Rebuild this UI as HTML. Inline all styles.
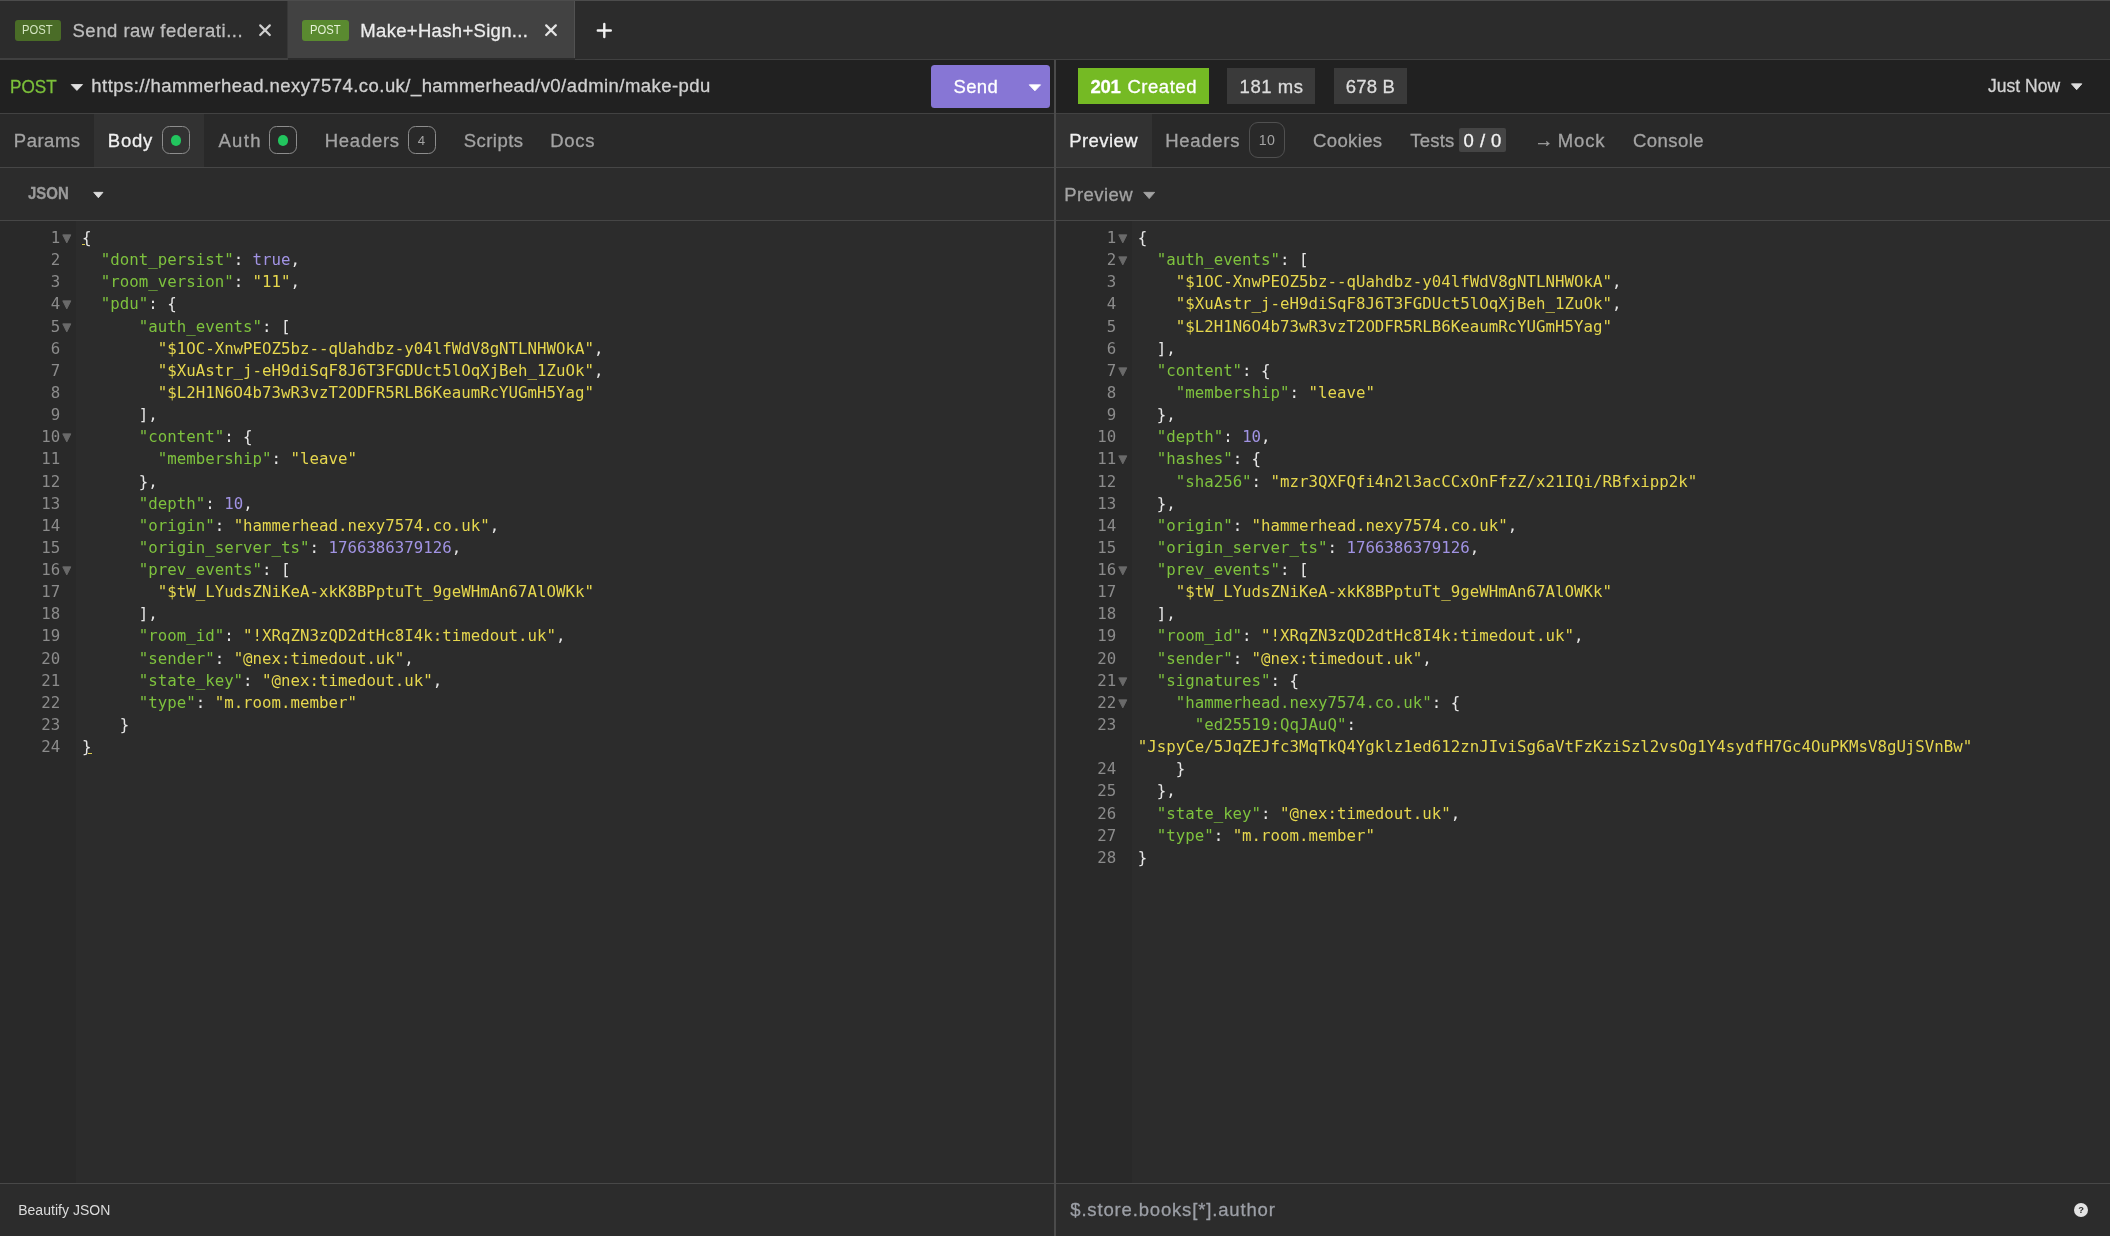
<!DOCTYPE html>
<html lang="en"><head><meta charset="utf-8"><title>Insomnia</title>
<style>
html,body{margin:0;padding:0;background:#2c2c2c;}
body{width:2110px;height:1236px;overflow:hidden;position:relative;font-family:"Liberation Sans", sans-serif;}
#app{position:absolute;left:0;top:0;width:2110px;height:1236px;overflow:hidden;background:#2c2c2c;}
#fg{position:absolute;left:0;top:0;width:2110px;height:1236px;will-change:transform;}
.b{position:absolute;display:block;}
.t{position:absolute;white-space:pre;transform-origin:0 0;}
.h{-webkit-text-stroke:0.3px currentColor;}
.cl,.ln{position:absolute;white-space:pre;font-family:"DejaVu Sans Mono", "Liberation Mono", monospace;font-size:15.7587px;line-height:22px;height:22px;color:#e6e6e6;}
.ln{width:60.3px;text-align:right;color:#8b8b8b;}

.k{color:#7ec23e;} .s{color:#e6d74e;} .n{color:#a193e3;}
</style></head>
<body><div id="app"><div id="fg">
<div class="b" style="left:0px;top:0px;width:2110.00px;height:1.00px;background:#4c4c4c;"></div>
<div class="b" style="left:287.7px;top:1px;width:286.20px;height:56.70px;background:#424242;"></div>
<div class="b" style="left:286.9px;top:1px;width:0.80px;height:56.90px;background:#383838;"></div>
<div class="b" style="left:573.9px;top:1px;width:1.20px;height:56.90px;background:#525252;"></div>
<div class="b" style="left:0px;top:57.9px;width:287.70px;height:2.10px;background:#404040;"></div>
<div class="b" style="left:575.1px;top:58.6px;width:1534.90px;height:1.45px;background:#414141;"></div>
<div class="b" style="left:0px;top:60.0px;width:2110.00px;height:52.70px;background:#212121;"></div>
<div class="b" style="left:0px;top:112.7px;width:2110.00px;height:1.60px;background:#424242;"></div>
<div class="b" style="left:0px;top:114.3px;width:2110.00px;height:52.50px;background:#292929;"></div>
<div class="b" style="left:93.8px;top:114.3px;width:110.10px;height:52.50px;background:#323232;"></div>
<div class="b" style="left:1056px;top:114.3px;width:95.90px;height:52.50px;background:#323232;"></div>
<div class="b" style="left:0px;top:166.8px;width:2110.00px;height:1.50px;background:#464646;"></div>
<div class="b" style="left:0px;top:219.8px;width:2110.00px;height:1.40px;background:#464646;"></div>
<div class="b" style="left:0px;top:221.2px;width:75.75px;height:961.70px;background:#292929;"></div>
<div class="b" style="left:1056px;top:221.2px;width:75.90px;height:961.70px;background:#292929;"></div>
<div class="b" style="left:0px;top:1182.9px;width:2110.00px;height:1.35px;background:#484848;"></div>
<div class="b" style="left:1054.0px;top:60.0px;width:2.05px;height:1176.00px;background:#4b4b4b;"></div>
<div class="b" style="left:15px;top:20px;width:46.00px;height:21.00px;background:#4a6c27;border-radius:3px;"></div>
<div class="b" style="left:302px;top:20px;width:47.00px;height:21.00px;background:#5a8a30;border-radius:3px;"></div>
<svg class="b" style="left:257px;top:22px" width="16" height="17" viewBox="257 22 16 17"><path d="M260.20 25.40L269.80 35.00M269.80 25.40L260.20 35.00" stroke="#cfcfcf" stroke-width="2.2" stroke-linecap="round" fill="none"/></svg>
<svg class="b" style="left:542px;top:22px" width="18" height="17" viewBox="542 22 18 17"><path d="M546.20 25.40L555.80 35.00M555.80 25.40L546.20 35.00" stroke="#e4e4e4" stroke-width="2.3" stroke-linecap="round" fill="none"/></svg>
<svg class="b" style="left:594px;top:20px" width="21" height="21" viewBox="594 20 21 21"><path d="M604.30 24.00V37.00M597.80 30.50H610.80" stroke="#f0f0f0" stroke-width="2.4" stroke-linecap="round" fill="none"/></svg>
<svg class="b" style="left:69px;top:83px" width="15" height="9" viewBox="69 83 15 9"><path d="M71.25 84.55H82.55L76.90 90.42Z" fill="#e0e0e0" stroke="#e0e0e0" stroke-width="0.9" stroke-linejoin="round"/></svg>
<div class="b" style="left:931px;top:65px;width:119.20px;height:43.00px;background:#8776d5;border-radius:3.5px;"></div>
<svg class="b" style="left:1027px;top:83px" width="15" height="10" viewBox="1027 83 15 10"><path d="M1029.25 84.85H1040.55L1034.90 90.82Z" fill="#ffffff" stroke="#ffffff" stroke-width="0.9" stroke-linejoin="round"/></svg>
<div class="b" style="left:1078px;top:68px;width:131.00px;height:36.00px;background:#75ba24;"></div>
<div class="b" style="left:1227px;top:68px;width:88.00px;height:36.00px;background:#3a3a3a;"></div>
<div class="b" style="left:1333.8px;top:68px;width:73.20px;height:36.00px;background:#3a3a3a;"></div>
<svg class="b" style="left:2070px;top:82px" width="14" height="10" viewBox="2070 82 14 10"><path d="M2071.45 83.85H2081.85L2076.65 89.72Z" fill="#dddddd" stroke="#dddddd" stroke-width="0.9" stroke-linejoin="round"/></svg>
<div class="b" style="left:162px;top:126px;width:28.00px;height:28.00px;box-sizing:border-box;border:1.4px solid #8d8d8d;border-radius:7.5px;"></div>
<div class="b" style="left:170.7px;top:135.0px;width:10.60px;height:10.60px;background:#22c55e;border-radius:50%;"></div>
<div class="b" style="left:269.1px;top:126px;width:28.00px;height:28.00px;box-sizing:border-box;border:1.4px solid #8d8d8d;border-radius:7.5px;"></div>
<div class="b" style="left:277.8px;top:135.0px;width:10.60px;height:10.60px;background:#22c55e;border-radius:50%;"></div>
<div class="b" style="left:408px;top:126px;width:28.00px;height:28.00px;box-sizing:border-box;border:1.4px solid #8d8d8d;border-radius:7.5px;"></div>
<div class="b" style="left:1249.1px;top:122.1px;width:35.90px;height:35.80px;box-sizing:border-box;border:1.4px solid #505050;border-radius:9px;"></div>
<div class="b" style="left:1458.8px;top:127.5px;width:47.20px;height:24.30px;background:#454545;border-radius:2px;"></div>
<svg class="b" style="left:92px;top:190px" width="13" height="10" viewBox="92 190 13 10"><path d="M93.75 192.35H102.95L98.35 197.72Z" fill="#dcdcdc" stroke="#dcdcdc" stroke-width="0.9" stroke-linejoin="round"/></svg>
<svg class="b" style="left:1142px;top:190px" width="15" height="11" viewBox="1142 190 15 11"><path d="M1143.75 192.35H1154.65L1149.20 198.61Z" fill="#a3a3a3" stroke="#a3a3a3" stroke-width="0.9" stroke-linejoin="round"/></svg>
<div class="b" style="left:2073.8px;top:1202.8px;width:14.40px;height:14.40px;background:#e4e4e4;border-radius:50%;"></div>
<span class="t" style="left:22.13px;top:21.00px;font-size:12.8px;line-height:17px;color:#d5e6c2;transform:scaleX(0.8781);">POST</span>
<span class="t h" style="left:72.52px;top:19.00px;font-size:18.5px;line-height:24px;color:#bdbdbd;letter-spacing:0.507px;">Send raw federati...</span>
<span class="t" style="left:310.13px;top:21.00px;font-size:12.8px;line-height:17px;color:#e6f2d8;transform:scaleX(0.8781);">POST</span>
<span class="t h" style="left:360.30px;top:19.00px;font-size:18.5px;line-height:24px;color:#ececec;letter-spacing:0.320px;">Make+Hash+Sign...</span>
<span class="t h" style="left:9.71px;top:75.00px;font-size:18.5px;line-height:24px;color:#7cc03a;transform:scaleX(0.9263);">POST</span>
<span class="t h" style="left:91.33px;top:74.00px;font-size:18.5px;line-height:24px;color:#d0d0d0;letter-spacing:0.446px;">https://hammerhead.nexy7574.co.uk/_hammerhead/v0/admin/make-pdu</span>
<span class="t h" style="left:953.52px;top:75.00px;font-size:18.5px;line-height:24px;color:#ffffff;letter-spacing:0.341px;">Send</span>
<span class="t h" style="left:1090.47px;top:75.00px;font-size:18.5px;line-height:24px;color:#ffffff;font-weight:700;letter-spacing:-0.224px;">201</span>
<span class="t h" style="left:1127.46px;top:75.00px;font-size:18.5px;line-height:24px;color:#ffffff;letter-spacing:0.533px;">Created</span>
<span class="t h" style="left:1239.62px;top:75.00px;font-size:18.5px;line-height:24px;color:#dcdcdc;letter-spacing:0.549px;">181 ms</span>
<span class="t h" style="left:1345.87px;top:75.00px;font-size:18.5px;line-height:24px;color:#dcdcdc;letter-spacing:0.188px;">678 B</span>
<span class="t h" style="left:1988.39px;top:74.00px;font-size:18.5px;line-height:24px;color:#d2d2d2;transform:scaleX(0.9470);">Just Now</span>
<span class="t h" style="left:13.85px;top:129.00px;font-size:18.5px;line-height:24px;color:#a3a3a3;letter-spacing:0.495px;">Params</span>
<span class="t h" style="left:107.85px;top:129.00px;font-size:18.5px;line-height:24px;color:#f0f0f0;letter-spacing:0.768px;">Body</span>
<span class="t h" style="left:218.39px;top:129.00px;font-size:18.5px;line-height:24px;color:#a3a3a3;letter-spacing:1.353px;">Auth</span>
<span class="t h" style="left:324.78px;top:129.00px;font-size:18.5px;line-height:24px;color:#a3a3a3;letter-spacing:0.727px;">Headers</span>
<span class="t" style="left:417.67px;top:132.00px;font-size:13.2px;line-height:17px;color:#a3a3a3;">4</span>
<span class="t h" style="left:463.68px;top:129.00px;font-size:18.5px;line-height:24px;color:#a3a3a3;letter-spacing:0.475px;">Scripts</span>
<span class="t h" style="left:550.24px;top:129.00px;font-size:18.5px;line-height:24px;color:#a3a3a3;letter-spacing:0.717px;">Docs</span>
<span class="t h" style="left:1069.30px;top:129.00px;font-size:18.5px;line-height:24px;color:#f0f0f0;letter-spacing:0.401px;">Preview</span>
<span class="t h" style="left:1165.30px;top:129.00px;font-size:18.5px;line-height:24px;color:#a3a3a3;letter-spacing:0.704px;">Headers</span>
<span class="t" style="left:1258.77px;top:131.00px;font-size:14.2px;line-height:18px;color:#a3a3a3;letter-spacing:0.400px;">10</span>
<span class="t h" style="left:1313.09px;top:129.00px;font-size:18.5px;line-height:24px;color:#a3a3a3;letter-spacing:0.356px;">Cookies</span>
<span class="t h" style="left:1410.36px;top:129.00px;font-size:18.5px;line-height:24px;color:#a3a3a3;letter-spacing:0.166px;">Tests</span>
<span class="t h" style="left:1463.54px;top:129.00px;font-size:18.5px;line-height:24px;color:#f4f4f4;letter-spacing:0.463px;">0 / 0</span>
<span class="t h" style="left:1534.35px;top:128.00px;font-size:19.0px;line-height:25px;color:#a3a3a3;">→</span>
<span class="t h" style="left:1557.64px;top:129.00px;font-size:18.5px;line-height:24px;color:#a3a3a3;letter-spacing:0.920px;">Mock</span>
<span class="t h" style="left:1633.07px;top:129.00px;font-size:18.5px;line-height:24px;color:#a3a3a3;letter-spacing:0.441px;">Console</span>
<span class="t h" style="left:28.20px;top:183.00px;font-size:16.4px;line-height:21px;color:#9a9a9a;font-weight:700;transform:scaleX(0.9143);">JSON</span>
<span class="t h" style="left:1064.33px;top:183.00px;font-size:18.5px;line-height:24px;color:#a3a3a3;letter-spacing:0.396px;">Preview</span>
<span class="t" style="left:18.14px;top:1201.00px;font-size:14.0px;line-height:18px;color:#dcdcdc;letter-spacing:0.035px;">Beautify JSON</span>
<span class="t" style="left:2078.16px;top:1204.00px;font-size:9.4px;line-height:12px;color:#2c2c2c;font-weight:700;">?</span>
<span class="t h" style="left:1070.25px;top:1198.00px;font-size:18.5px;line-height:24px;color:#9c9fa6;letter-spacing:0.838px;">$.store.books[*].author</span>
<div class="cl" style="left:81.90px;top:227.00px">{</div>
<div class="ln" style="left:0px;top:227.00px">1</div>
<svg class="b" style="left:61px;top:233px" width="12" height="12" viewBox="61 233 12 12"><path d="M62.75 234.85H70.85L66.80 242.91Z" fill="#6a6a6a" stroke="#6a6a6a" stroke-width="0.9" stroke-linejoin="round"/></svg>
<div class="cl" style="left:81.90px;top:249.00px">  <span class="k">"dont_persist"</span>: <span class="n">true</span>,</div>
<div class="ln" style="left:0px;top:249.00px">2</div>
<div class="cl" style="left:81.90px;top:271.00px">  <span class="k">"room_version"</span>: <span class="s">"11"</span>,</div>
<div class="ln" style="left:0px;top:271.00px">3</div>
<div class="cl" style="left:81.90px;top:293.00px">  <span class="k">"pdu"</span>: {</div>
<div class="ln" style="left:0px;top:293.00px">4</div>
<svg class="b" style="left:61px;top:299px" width="12" height="12" viewBox="61 299 12 12"><path d="M62.75 300.85H70.85L66.80 308.92Z" fill="#6a6a6a" stroke="#6a6a6a" stroke-width="0.9" stroke-linejoin="round"/></svg>
<div class="cl" style="left:81.90px;top:316.00px">      <span class="k">"auth_events"</span>: [</div>
<div class="ln" style="left:0px;top:316.00px">5</div>
<svg class="b" style="left:61px;top:322px" width="12" height="12" viewBox="61 322 12 12"><path d="M62.75 323.85H70.85L66.80 331.92Z" fill="#6a6a6a" stroke="#6a6a6a" stroke-width="0.9" stroke-linejoin="round"/></svg>
<div class="cl" style="left:81.90px;top:338.00px">        <span class="s">"$1OC-XnwPEOZ5bz--qUahdbz-y04lfWdV8gNTLNHWOkA"</span>,</div>
<div class="ln" style="left:0px;top:338.00px">6</div>
<div class="cl" style="left:81.90px;top:360.00px">        <span class="s">"$XuAstr_j-eH9diSqF8J6T3FGDUct5lOqXjBeh_1ZuOk"</span>,</div>
<div class="ln" style="left:0px;top:360.00px">7</div>
<div class="cl" style="left:81.90px;top:382.00px">        <span class="s">"$L2H1N6O4b73wR3vzT2ODFR5RLB6KeaumRcYUGmH5Yag"</span></div>
<div class="ln" style="left:0px;top:382.00px">8</div>
<div class="cl" style="left:81.90px;top:404.00px">      ],</div>
<div class="ln" style="left:0px;top:404.00px">9</div>
<div class="cl" style="left:81.90px;top:426.00px">      <span class="k">"content"</span>: {</div>
<div class="ln" style="left:0px;top:426.00px">10</div>
<svg class="b" style="left:61px;top:432px" width="12" height="12" viewBox="61 432 12 12"><path d="M62.75 433.85H70.85L66.80 441.92Z" fill="#6a6a6a" stroke="#6a6a6a" stroke-width="0.9" stroke-linejoin="round"/></svg>
<div class="cl" style="left:81.90px;top:448.00px">        <span class="k">"membership"</span>: <span class="s">"leave"</span></div>
<div class="ln" style="left:0px;top:448.00px">11</div>
<div class="cl" style="left:81.90px;top:471.00px">      },</div>
<div class="ln" style="left:0px;top:471.00px">12</div>
<div class="cl" style="left:81.90px;top:493.00px">      <span class="k">"depth"</span>: <span class="n">10</span>,</div>
<div class="ln" style="left:0px;top:493.00px">13</div>
<div class="cl" style="left:81.90px;top:515.00px">      <span class="k">"origin"</span>: <span class="s">"hammerhead.nexy7574.co.uk"</span>,</div>
<div class="ln" style="left:0px;top:515.00px">14</div>
<div class="cl" style="left:81.90px;top:537.00px">      <span class="k">"origin_server_ts"</span>: <span class="n">1766386379126</span>,</div>
<div class="ln" style="left:0px;top:537.00px">15</div>
<div class="cl" style="left:81.90px;top:559.00px">      <span class="k">"prev_events"</span>: [</div>
<div class="ln" style="left:0px;top:559.00px">16</div>
<svg class="b" style="left:61px;top:565px" width="12" height="12" viewBox="61 565 12 12"><path d="M62.75 566.85H70.85L66.80 574.91Z" fill="#6a6a6a" stroke="#6a6a6a" stroke-width="0.9" stroke-linejoin="round"/></svg>
<div class="cl" style="left:81.90px;top:581.00px">        <span class="s">"$tW_LYudsZNiKeA-xkK8BPptuTt_9geWHmAn67AlOWKk"</span></div>
<div class="ln" style="left:0px;top:581.00px">17</div>
<div class="cl" style="left:81.90px;top:603.00px">      ],</div>
<div class="ln" style="left:0px;top:603.00px">18</div>
<div class="cl" style="left:81.90px;top:625.00px">      <span class="k">"room_id"</span>: <span class="s">"!XRqZN3zQD2dtHc8I4k:timedout.uk"</span>,</div>
<div class="ln" style="left:0px;top:625.00px">19</div>
<div class="cl" style="left:81.90px;top:648.00px">      <span class="k">"sender"</span>: <span class="s">"@nex:timedout.uk"</span>,</div>
<div class="ln" style="left:0px;top:648.00px">20</div>
<div class="cl" style="left:81.90px;top:670.00px">      <span class="k">"state_key"</span>: <span class="s">"@nex:timedout.uk"</span>,</div>
<div class="ln" style="left:0px;top:670.00px">21</div>
<div class="cl" style="left:81.90px;top:692.00px">      <span class="k">"type"</span>: <span class="s">"m.room.member"</span></div>
<div class="ln" style="left:0px;top:692.00px">22</div>
<div class="cl" style="left:81.90px;top:714.00px">    }</div>
<div class="ln" style="left:0px;top:714.00px">23</div>
<div class="cl" style="left:81.90px;top:736.00px">}</div>
<div class="ln" style="left:0px;top:736.00px">24</div>
<div class="cl" style="left:1137.80px;top:227.00px">{</div>
<div class="ln" style="left:1056px;top:227.00px">1</div>
<svg class="b" style="left:1117px;top:233px" width="12" height="12" viewBox="1117 233 12 12"><path d="M1118.75 234.85H1126.85L1122.80 242.91Z" fill="#6a6a6a" stroke="#6a6a6a" stroke-width="0.9" stroke-linejoin="round"/></svg>
<div class="cl" style="left:1137.80px;top:249.00px">  <span class="k">"auth_events"</span>: [</div>
<div class="ln" style="left:1056px;top:249.00px">2</div>
<svg class="b" style="left:1117px;top:255px" width="12" height="12" viewBox="1117 255 12 12"><path d="M1118.75 256.85H1126.85L1122.80 264.92Z" fill="#6a6a6a" stroke="#6a6a6a" stroke-width="0.9" stroke-linejoin="round"/></svg>
<div class="cl" style="left:1137.80px;top:271.00px">    <span class="s">"$1OC-XnwPEOZ5bz--qUahdbz-y04lfWdV8gNTLNHWOkA"</span>,</div>
<div class="ln" style="left:1056px;top:271.00px">3</div>
<div class="cl" style="left:1137.80px;top:293.00px">    <span class="s">"$XuAstr_j-eH9diSqF8J6T3FGDUct5lOqXjBeh_1ZuOk"</span>,</div>
<div class="ln" style="left:1056px;top:293.00px">4</div>
<div class="cl" style="left:1137.80px;top:316.00px">    <span class="s">"$L2H1N6O4b73wR3vzT2ODFR5RLB6KeaumRcYUGmH5Yag"</span></div>
<div class="ln" style="left:1056px;top:316.00px">5</div>
<div class="cl" style="left:1137.80px;top:338.00px">  ],</div>
<div class="ln" style="left:1056px;top:338.00px">6</div>
<div class="cl" style="left:1137.80px;top:360.00px">  <span class="k">"content"</span>: {</div>
<div class="ln" style="left:1056px;top:360.00px">7</div>
<svg class="b" style="left:1117px;top:366px" width="12" height="12" viewBox="1117 366 12 12"><path d="M1118.75 367.85H1126.85L1122.80 375.92Z" fill="#6a6a6a" stroke="#6a6a6a" stroke-width="0.9" stroke-linejoin="round"/></svg>
<div class="cl" style="left:1137.80px;top:382.00px">    <span class="k">"membership"</span>: <span class="s">"leave"</span></div>
<div class="ln" style="left:1056px;top:382.00px">8</div>
<div class="cl" style="left:1137.80px;top:404.00px">  },</div>
<div class="ln" style="left:1056px;top:404.00px">9</div>
<div class="cl" style="left:1137.80px;top:426.00px">  <span class="k">"depth"</span>: <span class="n">10</span>,</div>
<div class="ln" style="left:1056px;top:426.00px">10</div>
<div class="cl" style="left:1137.80px;top:448.00px">  <span class="k">"hashes"</span>: {</div>
<div class="ln" style="left:1056px;top:448.00px">11</div>
<svg class="b" style="left:1117px;top:454px" width="12" height="12" viewBox="1117 454 12 12"><path d="M1118.75 455.85H1126.85L1122.80 463.92Z" fill="#6a6a6a" stroke="#6a6a6a" stroke-width="0.9" stroke-linejoin="round"/></svg>
<div class="cl" style="left:1137.80px;top:471.00px">    <span class="k">"sha256"</span>: <span class="s">"mzr3QXFQfi4n2l3acCCxOnFfzZ/x21IQi/RBfxipp2k"</span></div>
<div class="ln" style="left:1056px;top:471.00px">12</div>
<div class="cl" style="left:1137.80px;top:493.00px">  },</div>
<div class="ln" style="left:1056px;top:493.00px">13</div>
<div class="cl" style="left:1137.80px;top:515.00px">  <span class="k">"origin"</span>: <span class="s">"hammerhead.nexy7574.co.uk"</span>,</div>
<div class="ln" style="left:1056px;top:515.00px">14</div>
<div class="cl" style="left:1137.80px;top:537.00px">  <span class="k">"origin_server_ts"</span>: <span class="n">1766386379126</span>,</div>
<div class="ln" style="left:1056px;top:537.00px">15</div>
<div class="cl" style="left:1137.80px;top:559.00px">  <span class="k">"prev_events"</span>: [</div>
<div class="ln" style="left:1056px;top:559.00px">16</div>
<svg class="b" style="left:1117px;top:565px" width="12" height="12" viewBox="1117 565 12 12"><path d="M1118.75 566.85H1126.85L1122.80 574.91Z" fill="#6a6a6a" stroke="#6a6a6a" stroke-width="0.9" stroke-linejoin="round"/></svg>
<div class="cl" style="left:1137.80px;top:581.00px">    <span class="s">"$tW_LYudsZNiKeA-xkK8BPptuTt_9geWHmAn67AlOWKk"</span></div>
<div class="ln" style="left:1056px;top:581.00px">17</div>
<div class="cl" style="left:1137.80px;top:603.00px">  ],</div>
<div class="ln" style="left:1056px;top:603.00px">18</div>
<div class="cl" style="left:1137.80px;top:625.00px">  <span class="k">"room_id"</span>: <span class="s">"!XRqZN3zQD2dtHc8I4k:timedout.uk"</span>,</div>
<div class="ln" style="left:1056px;top:625.00px">19</div>
<div class="cl" style="left:1137.80px;top:648.00px">  <span class="k">"sender"</span>: <span class="s">"@nex:timedout.uk"</span>,</div>
<div class="ln" style="left:1056px;top:648.00px">20</div>
<div class="cl" style="left:1137.80px;top:670.00px">  <span class="k">"signatures"</span>: {</div>
<div class="ln" style="left:1056px;top:670.00px">21</div>
<svg class="b" style="left:1117px;top:676px" width="12" height="12" viewBox="1117 676 12 12"><path d="M1118.75 677.85H1126.85L1122.80 685.91Z" fill="#6a6a6a" stroke="#6a6a6a" stroke-width="0.9" stroke-linejoin="round"/></svg>
<div class="cl" style="left:1137.80px;top:692.00px">    <span class="k">"hammerhead.nexy7574.co.uk"</span>: {</div>
<div class="ln" style="left:1056px;top:692.00px">22</div>
<svg class="b" style="left:1117px;top:698px" width="12" height="12" viewBox="1117 698 12 12"><path d="M1118.75 699.85H1126.85L1122.80 707.91Z" fill="#6a6a6a" stroke="#6a6a6a" stroke-width="0.9" stroke-linejoin="round"/></svg>
<div class="cl" style="left:1137.80px;top:714.00px">      <span class="k">"ed25519:QqJAuQ"</span>:</div>
<div class="ln" style="left:1056px;top:714.00px">23</div>
<div class="cl" style="left:1137.80px;top:736.00px"><span class="s">"JspyCe/5JqZEJfc3MqTkQ4Ygklz1ed612znJIviSg6aVtFzKziSzl2vsOg1Y4sydfH7Gc4OuPKMsV8gUjSVnBw"</span></div>
<div class="cl" style="left:1137.80px;top:758.00px">    }</div>
<div class="ln" style="left:1056px;top:758.00px">24</div>
<div class="cl" style="left:1137.80px;top:780.00px">  },</div>
<div class="ln" style="left:1056px;top:780.00px">25</div>
<div class="cl" style="left:1137.80px;top:803.00px">  <span class="k">"state_key"</span>: <span class="s">"@nex:timedout.uk"</span>,</div>
<div class="ln" style="left:1056px;top:803.00px">26</div>
<div class="cl" style="left:1137.80px;top:825.00px">  <span class="k">"type"</span>: <span class="s">"m.room.member"</span></div>
<div class="ln" style="left:1056px;top:825.00px">27</div>
<div class="cl" style="left:1137.80px;top:847.00px">}</div>
<div class="ln" style="left:1056px;top:847.00px">28</div>
<div class="b" style="left:82.0px;top:244.3px;width:3.00px;height:1.00px;background:#d8c84d;"></div>
<div class="b" style="left:88.0px;top:753.4625px;width:4.00px;height:1.00px;background:#d8c84d;"></div>
</div></div></body></html>
